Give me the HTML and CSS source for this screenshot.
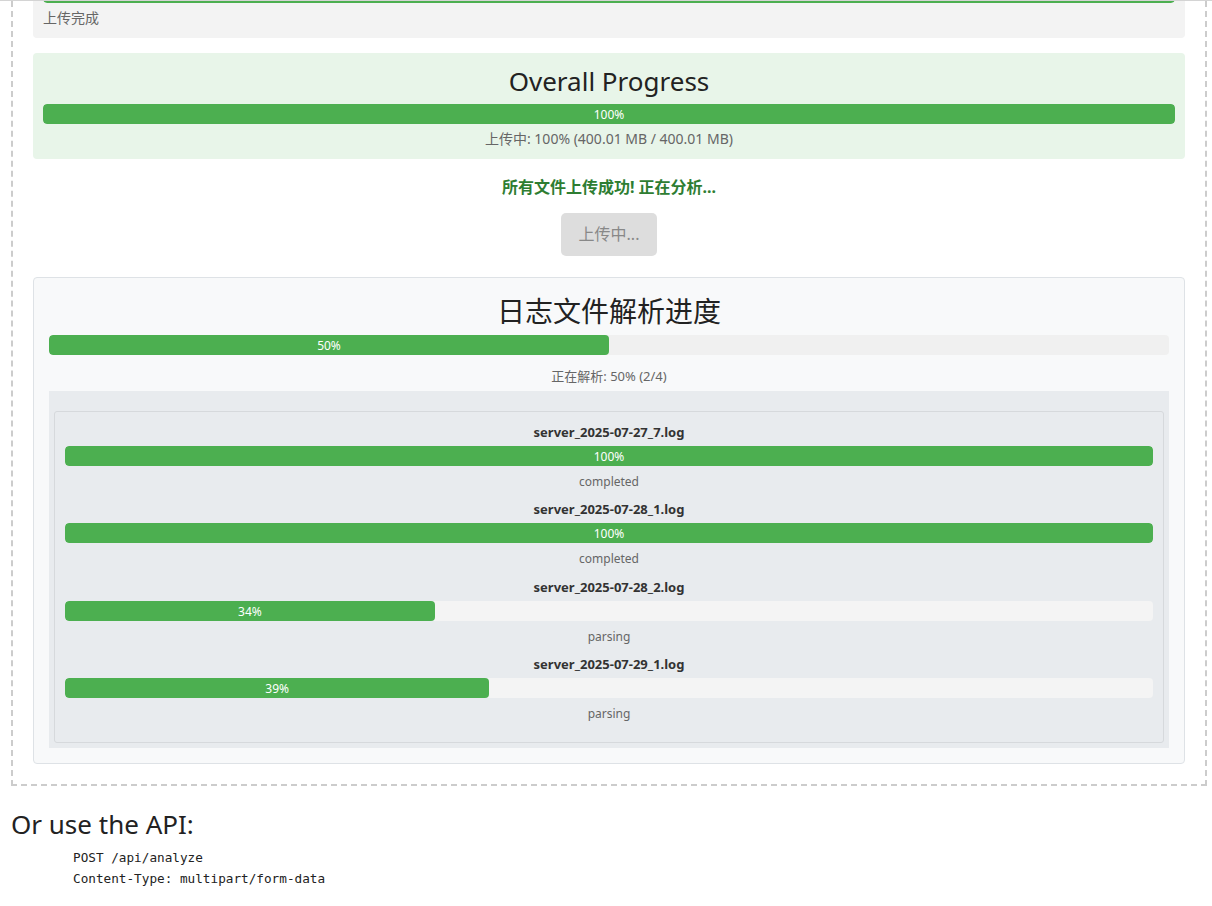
FILE: index.html
```html
<!DOCTYPE html>
<html lang="zh-CN">
<head>
<meta charset="utf-8">
<title>日志文件解析</title>
<link rel="stylesheet" href="styles.css">
</head>
<body>
<div class="topline"></div>
<div class="page">
  <div class="upload-area">
    <div class="file-card">
      <div class="progress progress--tail"><div class="progress-fill" style="width:100%"></div></div>
      <div class="file-status">上传完成</div>
    </div>

    <div class="overall-card">
      <h2 class="overall-title">Overall Progress</h2>
      <div class="progress"><div class="progress-fill" style="width:100%">100%</div></div>
      <div class="overall-text">上传中: 100% (400.01 MB / 400.01 MB)</div>
    </div>

    <p class="success-msg">所有文件上传成功! 正在分析...</p>

    <div class="btn-row"><button class="btn" disabled>上传中...</button></div>

    <div class="parse-card">
      <h3 class="parse-title">日志文件解析进度</h3>
      <div class="progress progress--parse"><div class="progress-fill" style="width:50%">50%</div></div>
      <div class="parse-text">正在解析: 50% (2/4)</div>
      <div class="parse-list-wrap">
        <div class="parse-list">
          <div class="parse-item">
            <div class="parse-name">server_2025-07-27_7.log</div>
            <div class="progress progress--item"><div class="progress-fill" style="width:100%">100%</div></div>
            <div class="parse-state">completed</div>
          </div>
          <div class="parse-item">
            <div class="parse-name">server_2025-07-28_1.log</div>
            <div class="progress progress--item"><div class="progress-fill" style="width:100%">100%</div></div>
            <div class="parse-state">completed</div>
          </div>
          <div class="parse-item">
            <div class="parse-name">server_2025-07-28_2.log</div>
            <div class="progress progress--item"><div class="progress-fill" style="width:34%">34%</div></div>
            <div class="parse-state">parsing</div>
          </div>
          <div class="parse-item">
            <div class="parse-name">server_2025-07-29_1.log</div>
            <div class="progress progress--item"><div class="progress-fill" style="width:39%">39%</div></div>
            <div class="parse-state">parsing</div>
          </div>
        </div>
      </div>
    </div>
  </div>

  <h2 class="api-title">Or use the API:</h2>
  <pre class="api-code">POST /api/analyze
Content-Type: multipart/form-data</pre>
</div>
</body>
</html>
```

FILE: styles.css
```css
* { box-sizing: border-box; }

html, body {
  margin: 0;
  padding: 0;
  background: #ffffff;
}

body {
  font-family: "Noto Sans", "Noto Sans CJK SC", sans-serif;
  color: #222;
}

.topline {
  height: 1px;
  background: #d4d4d4;
}

.page {
  margin: 0 5px 0 11px;
}

.upload-area {
  border: 2px dashed #cccccc;
  border-top: none;
  padding: 0 20px 20px;
}

/* progress bars */
.progress {
  height: 20px;
  background: #f0f0f0;
  border-radius: 4px;
  overflow: hidden;
}

.progress-fill {
  height: 100%;
  background: #4caf50;
  border-radius: 4px;
  color: #ffffff;
  font-size: 12px;
  line-height: 22px;
  text-align: center;
  white-space: nowrap;
}

/* top, already-uploaded file card (scrolled partly out of view) */
.file-card {
  background: #f3f3f3;
  border-radius: 0 0 4px 4px;
  padding: 0 10px 10px;
  overflow: hidden;
}

.progress--tail {
  margin-top: -18px;
}

.file-status {
  margin-top: 5px;
  font-size: 14px;
  line-height: 20px;
  color: #666;
}

/* overall */
.overall-card {
  margin-top: 15px;
  background: #e8f5e9;
  border-radius: 4px;
  padding: 10px;
  text-align: center;
}

.overall-title {
  margin: 0 0 5px;
  font-size: 26px;
  font-weight: 400;
  line-height: 36px;
  color: #222;
}

.overall-text {
  margin-top: 5px;
  font-size: 14px;
  line-height: 20px;
  color: #666;
}

.success-msg {
  margin: 17px 0 0;
  text-align: center;
  font-size: 16px;
  line-height: 22px;
  font-weight: 700;
  color: #2e7d32;
}

.btn-row {
  margin-top: 15px;
  display: flex;
  justify-content: center;
}

.btn {
  font-family: "Noto Sans", "Noto Sans CJK SC", sans-serif;
  font-size: 16px;
  line-height: 19px;
  padding: 12px 18px;
  border: none;
  border-radius: 5px;
  background: #dddddd;
  color: #888888;
}

/* parse card */
.parse-card {
  margin-top: 21px;
  background: #f8f9fa;
  border: 1px solid #dee2e6;
  border-radius: 4px;
  padding: 15px;
  text-align: center;
}

.parse-title {
  margin: 0 0 6px;
  font-size: 28px;
  font-weight: 400;
  line-height: 36px;
  color: #222;
}

.progress--parse {
  background: #f0f0f0;
}

.parse-text {
  margin-top: 12px;
  font-size: 13px;
  line-height: 18px;
  color: #666;
}

.parse-list-wrap {
  margin-top: 6px;
  background: #e8ebee;
  padding: 20px 5px 5px;
}

.parse-list {
  border: 1px solid #d6d9dc;
  border-radius: 3px;
  padding: 11px 10px 10px;
}

.parse-item {
  margin-bottom: 10.33px;
}

.parse-name {
  font-size: 13px;
  line-height: 18px;
  font-weight: 700;
  color: #333;
}

.progress--item {
  margin-top: 5px;
  background: #f4f4f4;
}

.parse-state {
  margin-top: 8px;
  font-size: 12px;
  line-height: 16px;
  color: #666;
}

/* API */
.api-title {
  margin: 21px 0 0;
  font-size: 26px;
  font-weight: 400;
  line-height: 34px;
  color: #222;
}

.api-code {
  margin: 6px 0 0;
  padding-left: 62px;
  font-family: "DejaVu Sans Mono", "Liberation Mono", monospace;
  font-size: 12.7px;
  line-height: 21px;
  color: #222;
}
```
